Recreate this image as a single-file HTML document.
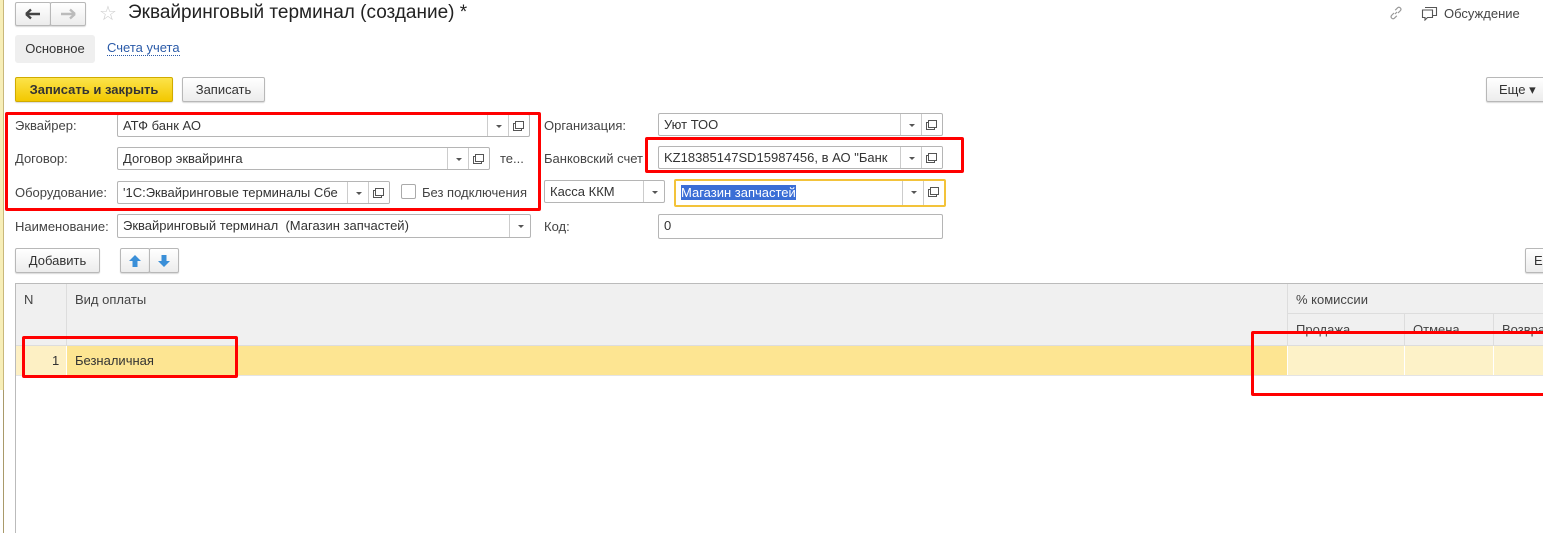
<!DOCTYPE html>
<html><head><meta charset="utf-8"><style>
*{box-sizing:border-box;margin:0;padding:0}
body{width:1543px;height:533px;overflow:hidden;background:#fff;font-family:"Liberation Sans",Arial,sans-serif;font-size:13px;color:#333;position:relative}
.a{position:absolute}
.f{position:absolute;border:1px solid #b5b5b5;border-radius:2px;background:#fff;height:23px;padding:3px 5px;white-space:nowrap;overflow:hidden;color:#333}
.dd,.op{position:absolute;top:0;bottom:0;width:21px;border-left:1px solid #ccc}
.dd::after{content:"";position:absolute;left:8px;top:10px;border:3px solid transparent;border-top:3px solid #555}
.op::after{content:"";position:absolute;left:6px;top:6px;width:7px;height:6px;border:1px solid #555;box-shadow:-2px 2px 0 -1px #fff,-2px 2px 0 0 #555}
.btn{position:absolute;border:1px solid #b8b8b8;border-radius:2px;background:linear-gradient(#fff,#ececec);height:25px;text-align:center;line-height:23px;color:#333;box-shadow:0 1px 1px rgba(0,0,0,.15)}
.lbl{position:absolute;color:#444}
.red{position:absolute;border:3px solid #f00;border-radius:2px}
</style></head><body>
<div class="a" style="left:0;top:0;width:4px;height:390px;background:#f7eeb8;border-right:1px solid #c9b87a"></div>
<div class="a" style="left:0;top:390px;width:4px;height:143px;border-right:1px solid #a99a6a"></div>

<div class="btn" style="left:15px;top:2px;width:36px;height:24px"><svg width="16" height="12" viewBox="0 0 16 12" style="margin-top:5px"><path d="M1 6H15M1 6L6 1.5M1 6L6 10.5" stroke="#444" stroke-width="2.4" fill="none"/></svg></div>
<div class="btn" style="left:50px;top:2px;width:36px;height:24px"><svg width="16" height="12" viewBox="0 0 16 12" style="margin-top:5px"><path d="M1 6H15M15 6L10 1.5M15 6L10 10.5" stroke="#bbb" stroke-width="2.4" fill="none"/></svg></div>
<div class="a" style="left:99px;top:1px;font-size:20px;color:#ccc">☆</div>
<div class="a" style="left:128px;top:2px;font-size:19px;color:#222">Эквайринговый терминал (создание) *</div>
<svg class="a" style="left:1389px;top:6px" width="14" height="14" viewBox="0 0 14 14"><path d="M6 8L8 6M5 7L2.5 9.5a2 2 0 0 0 2.8 2.8L7.8 9.8M9 7l2.5-2.5a2 2 0 0 0-2.8-2.8L6.2 4.2" stroke="#999" stroke-width="1.2" fill="none"/></svg>
<svg class="a" style="left:1421px;top:6px" width="17" height="15" viewBox="0 0 17 15"><path d="M4 1.5h11.5v8h-4M1.5 4h10v7.5H6.5L4 14v-2.5H1.5z" stroke="#555" stroke-width="1.1" fill="#fff"/></svg>
<div class="a" style="left:1444px;top:6px;color:#444">Обсуждение</div>

<div class="a" style="left:15px;top:35px;width:80px;height:28px;background:#efefef;border-radius:3px;text-align:center;line-height:28px;color:#333">Основное</div>
<div class="a" style="left:107px;top:41px;color:#2a5aa8;border-bottom:1px dotted #2a5aa8;line-height:14px">Счета учета</div>

<div class="btn" style="left:15px;top:77px;width:158px;background:linear-gradient(#fce34a,#f3c800);border-color:#d0ab00;font-weight:bold;color:#333">Записать и закрыть</div>
<div class="btn" style="left:182px;top:77px;width:83px">Записать</div>
<div class="btn" style="left:1486px;top:77px;width:60px;text-align:left;padding-left:12px">Еще ▾</div>

<div class="lbl" style="left:15px;top:118px">Эквайрер:</div>
<div class="f" style="left:117px;top:114px;width:413px">АТФ банк АО<span class="dd" style="right:21px"></span><span class="op" style="right:0"></span></div>
<div class="lbl" style="left:15px;top:151px">Договор:</div>
<div class="f" style="left:117px;top:147px;width:373px">Договор эквайринга<span class="dd" style="right:21px"></span><span class="op" style="right:0"></span></div>
<div class="lbl" style="left:500px;top:151px">те...</div>
<div class="lbl" style="left:15px;top:185px">Оборудование:</div>
<div class="f" style="left:117px;top:181px;width:273px">'1С:Эквайринговые терминалы Сбе<span class="dd" style="right:21px;background:#fff"></span><span class="op" style="right:0;background:#fff"></span></div>
<div class="a" style="left:401px;top:184px;width:15px;height:15px;border:1px solid #aaa;border-radius:2px"></div>
<div class="lbl" style="left:422px;top:185px">Без подключения</div>
<div class="red" style="left:5px;top:112px;width:536px;height:99px"></div>

<div class="lbl" style="left:544px;top:118px">Организация:</div>
<div class="f" style="left:658px;top:113px;width:285px">Уют ТОО<span class="dd" style="right:21px"></span><span class="op" style="right:0"></span></div>
<div class="lbl" style="left:544px;top:151px">Банковский счет</div>
<div class="f" style="left:658px;top:146px;width:285px">KZ18385147SD15987456, в АО "Банк<span class="dd" style="right:21px;background:#fff"></span><span class="op" style="right:0;background:#fff"></span></div>
<div class="red" style="left:645px;top:137px;width:319px;height:36px"></div>
<div class="f" style="left:544px;top:180px;width:121px">Касса ККМ<span class="dd" style="right:0"></span></div>
<div class="f" style="left:674px;top:179px;width:272px;height:28px;border:2px solid #f3c33a;padding:4px 5px"><span style="background:#3a6ed6;color:#fff">Магазин запчастей</span><span class="dd" style="right:21px"></span><span class="op" style="right:0"></span></div>

<div class="lbl" style="left:15px;top:219px">Наименование:</div>
<div class="f" style="left:117px;top:214px;width:414px;height:24px">Эквайринговый терминал&nbsp; (Магазин запчастей)<span class="dd" style="right:0"></span></div>
<div class="lbl" style="left:544px;top:219px">Код:</div>
<div class="f" style="left:658px;top:214px;width:285px;height:25px">0</div>

<div class="btn" style="left:15px;top:248px;width:85px">Добавить</div>
<div class="btn" style="left:120px;top:248px;width:30px"><svg width="14" height="14" viewBox="0 0 14 14" style="margin-top:5px"><path d="M7 1L13 7H9.5V13H4.5V7H1Z" fill="#3a8fd8"/></svg></div>
<div class="btn" style="left:149px;top:248px;width:30px"><svg width="14" height="14" viewBox="0 0 14 14" style="margin-top:5px"><path d="M7 13L13 7H9.5V1H4.5V7H1Z" fill="#3a8fd8"/></svg></div>
<div class="btn" style="left:1525px;top:248px;width:30px;text-align:left;padding-left:8px">Е</div>

<div class="a" style="left:15px;top:283px;width:1530px;height:250px;border-left:1px solid #bbb;border-top:1px solid #bbb"></div>
<div class="a" style="left:16px;top:284px;width:1530px;height:61px;background:#f0f0f0"></div>
<div class="a" style="left:66px;top:284px;width:1px;height:61px;background:#ddd"></div>
<div class="a" style="left:1287px;top:284px;width:1px;height:61px;background:#ddd"></div>
<div class="a" style="left:1288px;top:313px;width:260px;height:1px;background:#ddd"></div>
<div class="a" style="left:1404px;top:314px;width:1px;height:31px;background:#ddd"></div>
<div class="a" style="left:1493px;top:314px;width:1px;height:31px;background:#ddd"></div>
<div class="a" style="left:16px;top:345px;width:1530px;height:1px;background:#ddd"></div>
<div class="lbl" style="left:24px;top:292px">N</div>
<div class="lbl" style="left:75px;top:292px">Вид оплаты</div>
<div class="lbl" style="left:1296px;top:292px">% комиссии</div>
<div class="lbl" style="left:1296px;top:322px">Продажа</div>
<div class="lbl" style="left:1413px;top:322px">Отмена</div>
<div class="lbl" style="left:1502px;top:322px">Возвра</div>

<div class="a" style="left:16px;top:346px;width:50px;height:29px;background:#fdf0c4"></div>
<div class="a" style="left:67px;top:346px;width:1220px;height:29px;background:#fde592"></div>
<div class="a" style="left:1288px;top:346px;width:116px;height:29px;background:#fdf2c8"></div>
<div class="a" style="left:1405px;top:346px;width:88px;height:29px;background:#fdf2c8"></div>
<div class="a" style="left:1494px;top:346px;width:60px;height:29px;background:#fdf2c8"></div>
<div class="a" style="left:16px;top:375px;width:1530px;height:1px;background:#e4e4e4"></div>
<div class="lbl" style="left:52px;top:353px;color:#333">1</div>
<div class="lbl" style="left:75px;top:353px;color:#333">Безналичная</div>
<div class="red" style="left:22px;top:336px;width:216px;height:42px"></div>
<div class="red" style="left:1251px;top:331px;width:300px;height:65px"></div>
</body></html>
